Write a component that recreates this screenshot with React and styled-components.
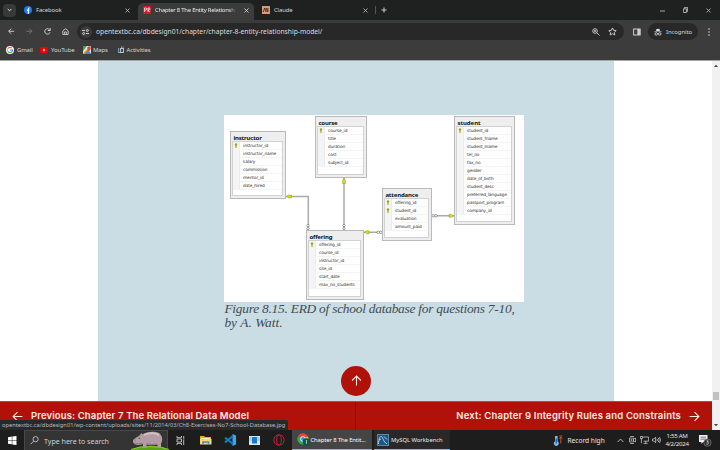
import React from "react";
import styled, { createGlobalStyle } from "styled-components";

const Global = createGlobalStyle`
  * { box-sizing: border-box; }
  html, body { margin: 0; padding: 0; }
  body { width: 720px; height: 450px; overflow: hidden; background: #fff; }
  svg { display: block; flex: none; }
`;

const Screen = styled.div`
  width: 720px;
  height: 450px;
  display: flex;
  flex-direction: column;
  overflow: hidden;
  font-family: "Noto Sans", "Open Sans", sans-serif;
  white-space: nowrap;
`;

/* Shared text: $w is the width the label takes in its row */
const Label = styled.span`
  flex: none;
  width: ${(p) => (p.$w ? p.$w + "px" : "auto")};
  font-size: ${(p) => p.$size || 6}px;
  letter-spacing: ${(p) => p.$ls || 0}px;
  color: ${(p) => p.$color || "#d5d6d6"};
  margin-left: ${(p) => p.$ml || 0}px;
  mask-image: ${(p) => (p.$fade ? "linear-gradient(90deg, #000 88%, transparent)" : "none")};
`;

const Slot = styled.span`
  display: flex;
  flex: none;
  margin-left: ${(p) => p.$ml || 0}px;
`;

/* Browser chrome */
const TabBar = styled.div`
  height: 20px;
  flex: none;
  display: flex;
  align-items: center;
  background: #1f2120;
`;
const TabSearch = styled.div`
  width: 13px;
  height: 13px;
  margin-left: 3px;
  border-radius: 4px;
  background: #383939;
  display: grid;
  place-items: center;
`;
const Tab = styled.div`
  width: ${(p) => p.$w}px;
  height: ${(p) => (p.$active ? 17 : 20)}px;
  align-self: flex-end;
  display: flex;
  align-items: center;
  padding-left: ${(p) => p.$pl}px;
  padding-bottom: ${(p) => (p.$active ? 3 : 0)}px;
  padding-right: ${(p) => p.$pr}px;
  border-radius: 5px 5px 0 0;
  background: ${(p) => (p.$active ? "#3c3c3c" : "transparent")};
`;
const Spacer = styled.span`flex: 1;`;
const Divider = styled.span`
  width: 1px;
  height: 8px;
  background: #555;
`;

const Toolbar = styled.div`
  height: 21px;
  flex: none;
  display: flex;
  align-items: center;
  background: #3c3c3c;
  padding-top: 2px;
`;
const Omnibox = styled.div`
  width: 547px;
  height: 17px;
  margin-left: 8px;
  border-radius: 9px;
  background: #282828;
  display: flex;
  align-items: center;
  padding-left: 3px;
  padding-right: 7px;
`;
const SiteInfo = styled.span`
  width: 12px;
  height: 12px;
  border-radius: 50%;
  background: #3c3c3c;
  display: grid;
  place-items: center;
`;
const Incognito = styled.div`
  width: 50px;
  height: 17px;
  margin-left: 7px;
  border-radius: 9px;
  background: #282828;
  display: flex;
  align-items: center;
  padding-left: 6px;
`;
const Bookmarks = styled.div`
  height: 20px;
  flex: none;
  display: flex;
  align-items: center;
  padding-bottom: 1px;
  background: #3c3c3c;
  border-bottom: 1px solid #a3a6a7;
`;

/* Page */
const Viewport = styled.div`
  height: 369px;
  flex: none;
  display: flex;
`;
const Page = styled.main`
  width: 712px;
  display: flex;
  flex-direction: column;
  background: #fff;
  position: relative;
`;
const Article = styled.article`
  width: 516px;
  height: 340px;
  margin-left: 98px;
  padding: 54px 0 0 126.4px;
  background: #cbdde4;
`;
const Diagram = styled.div`
  position: relative;
  width: 300px;
  height: 187px;
  background: #fff;
`;
const Wires = styled.svg`
  position: absolute;
  inset: 0;
`;
const Entity = styled.section`
  position: absolute;
  left: ${(p) => p.$x}px;
  top: ${(p) => p.$y}px;
  width: ${(p) => p.$w}px;
  height: ${(p) => p.$h}px;
  display: flex;
  flex-direction: column;
  border: 1px solid #b9b9b9;
  background: #eeeeee;
  padding: 0 2px 2px 1.5px;
`;
const EntityName = styled.h3`
  margin: 0;
  height: 9px;
  flex: none;
  padding: 1.6px 0 0 1px;
  font: 700 6px/8px "Noto Sans", sans-serif;
  letter-spacing: ${(p) => p.$ls}px;
  color: #111;
`;
const Fields = styled.div`
  flex: 1;
  background: #fff;
  border: 1px solid #d2d2d2;
`;
const Field = styled.div`
  height: 8px;
  display: flex;
  align-items: center;
  font: 400 4.3px/7px "DejaVu Sans", sans-serif;
  letter-spacing: -0.14px;
  color: #303030;
  border-bottom: 1px solid #f4f4f4;
`;
const KeyCell = styled.span`
  width: 7px;
  height: 7px;
  margin-right: 2.7px;
  flex: none;
  display: grid;
  place-items: center;
  background: ${(p) => (p.$key ? "#f5f5e6" : "#f3f4f6")};
  border-right: 1px solid #ebebee;
`;
const Caption = styled.p`
  margin: 0;
  font: italic 400 13.4px/14px "Liberation Serif", serif;
  color: #3f4c53;
`;
const CaptionLine = styled.span`
  display: block;
  letter-spacing: ${(p) => p.$ls}px;
`;
const ToTop = styled.button`
  position: absolute;
  left: 341px;
  top: 304.5px;
  width: 30px;
  height: 30px;
  padding: 0;
  border: 0;
  border-radius: 50%;
  background: #b01109;
  display: grid;
  place-items: center;
`;
const PageNav = styled.nav`
  height: 29px;
  display: grid;
  grid-template-columns: 356px 356px;
  background: #b01109;
  border-top: 1px solid #c7423b;
`;
const NavLink = styled.div`
  display: flex;
  align-items: center;
  justify-content: ${(p) => (p.$next ? "flex-end" : "flex-start")};
  padding: 0 12px 0;
  gap: 8px;
  border-right: ${(p) => (p.$next ? "0" : "1px solid #920d08")};
  font: 600 9.5px/14px Inter, sans-serif;
  letter-spacing: ${(p) => p.$ls}px;
  color: #ffe9e4;
`;
const StatusBubble = styled.div`
  position: absolute;
  left: 0;
  bottom: 0;
  width: 288px;
  height: 10px;
  padding-left: 2px;
  background: #292929;
  border-radius: 0 2px 0 0;
  font-size: 5.7px;
  line-height: 10px;
  letter-spacing: 0.015px;
  color: #b9bbbd;
`;
const Scrollbar = styled.div`
  width: 8px;
  background: #f1f1f1;
  display: flex;
  flex-direction: column;
  align-items: center;
  justify-content: space-between;
  padding: 3px 0;
`;
const Thumb = styled.div`
  width: 6px;
  height: 8px;
  margin-top: 325px;
  margin-bottom: auto;
  background: #c1c1c1;
`;

/* Taskbar */
const Taskbar = styled.footer`
  height: 20px;
  flex: none;
  display: flex;
  align-items: center;
  background: #1d1d1d;
`;
const SearchBox = styled.div`
  width: 144px;
  height: 20px;
  margin-left: 6px;
  background: #343434;
  border: 1px solid #484848;
  border-width: 1px 1px 0 1px;
  display: flex;
  align-items: center;
  padding-left: 5px;
`;
const TaskButton = styled.div`
  width: ${(p) => p.$w}px;
  height: 20px;
  margin-left: ${(p) => p.$ml}px;
  background: ${(p) => (p.$active ? "#454545" : "#282828")};
  border-bottom: 1px solid #76b9ed;
  display: flex;
  align-items: center;
  padding-left: ${(p) => p.$pl}px;
`;
const Clock = styled.div`
  width: 28px;
  margin-left: 2px;
  text-align: center;
  font-size: 6.1px;
  line-height: 8.5px;
  letter-spacing: -0.28px;
  color: #e6e6e6;
`;

const Close = ({ s = 5, c = "#c9caca" }) => (
  <svg width={s} height={s} viewBox="0 0 5 5" stroke={c} strokeWidth=".75"><path d="M.5 .5l4 4M4.5 .5l-4 4" /></svg>
);
const Arrow = ({ dir, s = 8, c = "#d4d4d4", w = 1 }) => (
  <svg width={s} height={s} viewBox="0 0 10 10" fill="none" stroke={c} strokeWidth={w}>
    <g transform={`rotate(${{ left: 0, up: 90, right: 180 }[dir]} 5 5)`}><path d="M9.5 5H1M5 1L1 5l4 4" /></g>
  </svg>
);
const ChromeLogo = () => (
  <svg width="14" height="13" viewBox="0 0 14 13">
    <path d="M6 6L1.1 3.2A5.6 5.6 0 0 1 10.9 3.2z" fill="#ea4335" />
    <path d="M6 6L1.1 3.2A5.6 5.6 0 0 0 6 11.6z" fill="#34a853" />
    <path d="M6 6L6 11.6A5.6 5.6 0 0 0 10.9 3.2z" fill="#fbbc05" />
    <circle cx="6" cy="6" r="2.7" fill="#fff" /><circle cx="6" cy="6" r="2" fill="#4285f4" />
    <circle cx="9.3" cy="8.9" r="3.6" fill="#0e5744" /><path d="M9.4 7v3.8" stroke="#d8eee7" strokeWidth=".8" />
  </svg>
);
const Hippo = () => (
  <svg width="39" height="19" viewBox="0 0 39 19">
    <path d="M0 19Q8 14.5 20 14.7Q31 14.5 38 19z" fill="#5aa319" />
    <path d="M0 18.5Q8 15.2 19 15.7Q30 15.3 38 18.5" stroke="#91c92e" fill="none" strokeWidth="1" />
    <path d="M2 11C1.5 7.5 6 6.5 9 4L10.2 2l1.3 1.3C15 .5 23 0 27 1.5C32 4 32 10 30 12.5V16H26.5v-2.5C22 14.5 18 14.5 15.5 13.5v3H12V13C8 14.5 3 14.5 2 11z" fill="#b39da2" />
    <path d="M13 4C18 1.5 25 1.5 28 4.5" stroke="#d3c2c4" strokeWidth="1.8" fill="none" />
    <path d="M3.5 12Q7 13.8 11.5 12M15.5 12.8q5 1.3 10 .3" stroke="#806970" strokeWidth=".8" fill="none" />
    <circle cx="8.3" cy="7.2" r=".6" fill="#35262a" /><circle cx="4.3" cy="9" r=".4" fill="#503e42" />
  </svg>
);
const KeyIcon = () => (
  <svg width="4" height="5" viewBox="0 0 4 5"><circle cx="2" cy="1.5" r="1.2" fill="#a3a42b" /><path d="M2 2v3" stroke="#77781f" strokeWidth=".8" /></svg>
);

const ENTITIES = [
  { name: "instructor", x: 5.5, y: 16, w: 56.5, h: 67.5, keys: 1, ls: -0.17, fields: ["instructor_id", "instructor_name", "salary", "commission", "mentor_id", "date_hired"] },
  { name: "course", x: 90.5, y: 1, w: 52, h: 61.5, keys: 1, ls: -0.17, fields: ["course_id", "title", "duration", "cost", "subject_id"] },
  { name: "student", x: 229.5, y: 1, w: 61.5, h: 109, keys: 1, ls: -0.02, fields: ["student_id", "student_fname", "student_lname", "tel_no", "fax_no", "gender", "date_of_birth", "student_desc", "preferred_language", "passport_program", "company_id"] },
  { name: "attendance", x: 157.5, y: 73, w: 50, h: 52.5, keys: 2, ls: -0.15, fields: ["offering_id", "student_id", "evaluation", "amount_paid"] },
  { name: "offering", x: 81.5, y: 115, w: 58.5, h: 69.5, keys: 1, ls: -0.15, fields: ["offering_id", "course_id", "instructor_id", "site_id", "start_date", "max_no_students"] },
];

function BrowserTop() {
  return (
    <>
      <TabBar>
        <TabSearch><svg width="5" height="4" viewBox="0 0 5 4" fill="none" stroke="#ddd"><path d="M.7 1l1.8 1.8L4.3 1" /></svg></TabSearch>
        <Tab $w={122} $pl={8} $pr={8}>
          <svg width="8" height="8" viewBox="0 0 8 8"><circle cx="4" cy="4" r="4" fill="#1877f2" /><path d="M4.3 8V3.1c0-.9.4-1.2 1.4-1.1M2.8 4.4h2.6" stroke="#fff" strokeWidth="1.1" fill="none" /></svg>
          <Label $ml={4} $ls={-0.18}>Facebook</Label><Spacer /><Close />
        </Tab>
        <Tab $w={116} $pl={5} $pr={5} $active>
          <svg width="8" height="8" viewBox="0 0 8 8"><rect width="8" height="8" rx="1" fill="#c91f2c" /><path d="M1.6 6V2h1.2q1 0 1 1t-1 1H1.6M5 6V2h1.2q.8 0 .8 1t-.8 1H5l1.7 2" stroke="#fff" strokeWidth=".7" fill="none" /></svg>
          <Label $ml={4} $w={83} $fade $size={5.9} $ls={-0.23} $color="#ebebeb">Chapter 8 The Entity Relationsh</Label><Spacer /><Close c="#eee" />
        </Tab>
        <Tab $w={121} $pl={8} $pr={7}>
          <svg width="8" height="8" viewBox="0 0 8 8"><rect width="8" height="8" fill="#d99a75" /><path d="M1.2 6L2.7 2 4.2 6M4.1 2L5.6 6M5.9 2v4" stroke="#30231e" strokeWidth=".85" fill="none" /></svg>
          <Label $ml={4} $ls={-0.18}>Claude</Label><Spacer /><Close />
        </Tab>
        <Divider />
        <Slot $ml={5}><svg width="6" height="6" viewBox="0 0 6 6" stroke="#ccc"><path d="M3 .5v5M.5 3h5" /></svg></Slot>
        <Spacer />
        <svg width="5" height="5" viewBox="0 0 5 5" stroke="#ccc" strokeWidth=".8"><path d="M0 3h5" /></svg>
        <Slot $ml={18}><svg width="5" height="6" viewBox="0 0 5 6" stroke="#ccc" strokeWidth=".8" fill="none"><path d="M.4 1.8h3v3.7h-3zM1.4 1.6V.4h3.2v4H3.5" /></svg></Slot>
        <Slot $ml={18}><Close /></Slot>
        <Slot $ml={9} />
      </TabBar>
      <Toolbar>
        <Slot $ml={8}><Arrow dir="left" s={6.5} w={1.4} /></Slot>
        <Slot $ml={11.5}><Arrow dir="right" s={6.5} w={1.4} c="#777" /></Slot>
        <Slot $ml={11}><svg width="7" height="7" viewBox="0 0 7 7" fill="none" stroke="#d4d4d4" strokeWidth=".95"><path d="M6 4.3A2.7 2.7 0 1 1 5.5 1.7L6 2.3M6.2 0v2.5H3.8" /></svg></Slot>
        <Slot $ml={11}><svg width="7" height="7" viewBox="0 0 7 7" fill="none" stroke="#d4d4d4" strokeWidth=".85"><path d="M.8 2.9L3.5.7l2.7 2.2v3.6H.8zM2.6 6.3V3.9h1.8v2.4" /></svg></Slot>
        <Omnibox>
          <SiteInfo><svg width="7" height="6" viewBox="0 0 7 6" fill="none" stroke="#ddd" strokeWidth=".9"><path d="M0 1.5h3M4 4.5h3" /><circle cx="5.3" cy="1.5" r="1" /><circle cx="1.7" cy="4.5" r="1" /></svg></SiteInfo>
          <Label $ml={4.5} $size={6.7} $color="#dcdddd" $ls={-0.01}>opentextbc.ca/dbdesign01/chapter/chapter-8-entity-relationship-model/</Label>
          <Spacer />
          <svg width="8" height="8" viewBox="0 0 8 8" fill="none" stroke="#d4d4d4" strokeWidth=".9"><circle cx="3" cy="3" r="2.3" /><path d="M4.7 4.7l2.8 2.8M2 3h2M3 2v2" /></svg>
          <Slot $ml={8}><svg width="9" height="9" viewBox="0 0 9 9" fill="none" stroke="#d4d4d4" strokeWidth=".9"><path d="M4.5.9l1.1 2.4 2.6.3-1.9 1.8.5 2.6-2.3-1.3L2.2 8l.5-2.6L.8 3.6l2.6-.3z" /></svg></Slot>
        </Omnibox>
        <Slot $ml={9}><svg width="8" height="8" viewBox="0 0 8 8"><rect x=".6" y="1" width="6.5" height="6" fill="none" stroke="#ccc" strokeWidth="1" /><rect x="4.3" y="1" width="3" height="6" fill="#ccc" /></svg></Slot>
        <Incognito>
          <svg width="8" height="8" viewBox="0 0 8 8"><path d="M2 3L2.6.7 4 1.1 5.4.7 6 3zM.3 3.4h7.4v.7H.3z" fill="#ddd" /><g fill="none" stroke="#ddd" strokeWidth=".8"><circle cx="2.2" cy="5.9" r="1.3" /><circle cx="5.8" cy="5.9" r="1.3" /><path d="M3.4 5.6h1.2" /></g></svg>
          <Label $ml={4.5} $ls={-0.1}>Incognito</Label>
        </Incognito>
        <Slot $ml={10}><svg width="2" height="8" viewBox="0 0 2 8" fill="#ccc"><circle cx="1" cy="1" r=".8" /><circle cx="1" cy="4" r=".8" /><circle cx="1" cy="7" r=".8" /></svg></Slot>
      </Toolbar>
      <Bookmarks>
        <Slot $ml={6}><svg width="8" height="8" viewBox="0 0 8 8"><circle cx="4" cy="4" r="4" fill="#fff" /><g fill="none" strokeWidth="1.1"><path d="M5.8 2.2A2.6 2.6 0 0 0 1.7 2.8" stroke="#ea4335" /><path d="M1.7 2.8a2.6 2.6 0 0 0 0 2.4" stroke="#fbbc05" /><path d="M1.7 5.2a2.6 2.6 0 0 0 4.1.6" stroke="#34a853" /><path d="M5.8 5.8A2.6 2.6 0 0 0 6.6 4H4" stroke="#4285f4" /></g></svg></Slot>
        <Label $ml={3} $w={23} $ls={-0.18}>Gmail</Label>
        <svg width="8" height="6" viewBox="0 0 8 6"><rect width="8" height="6" rx="1.4" fill="#f00000" /><path d="M3.2 1.6v2.8L5.6 3z" fill="#fff" /></svg>
        <Label $ml={3} $w={31.5} $ls={-0.1}>YouTube</Label>
        <svg width="8" height="8" viewBox="0 0 8 8"><rect width="8" height="8" rx="1" fill="#e6e9e8" /><path d="M0 0h4L0 5z" fill="#34a853" /><path d="M0 8l5-5 3 5z" fill="#4285f4" /><path d="M0 8l4.2-4.4" stroke="#fbbc05" strokeWidth="1.4" /><path d="M6 5.5C5 4 4.2 3.2 4.2 2a1.8 1.8 0 0 1 3.6 0c0 1.2-.8 2-1.8 3.5z" fill="#ea4335" /></svg>
        <Label $ml={2.5} $w={23.5} $ls={-0.15}>Maps</Label>
        <svg width="8" height="8" viewBox="0 0 8 8" fill="none"><path d="M4 1.2h2.5M1.6 2.2v4.3H4" stroke="#83b7dd" strokeWidth="1.2" strokeDasharray="1.5 .5" /><rect x="3.6" y="2.5" width="2.8" height="4" stroke="#c9d5de" strokeWidth=".9" /></svg>
        <Label $ml={2} $ls={-0.1}>Activities</Label>
      </Bookmarks>
    </>
  );
}

function SchoolDiagram() {
  return (
    <Diagram>
      <Wires width="300" height="187" viewBox="0 0 300 187" fill="none">
        <g stroke="#aaa" strokeWidth="1.5">
          <path d="M62 81.5H84.3V115M120 63V115M140 117.3H158M208 100.8H230" />
        </g>
        <g stroke="#666" strokeWidth=".6" fill="#fff">
          <circle cx="84" cy="110.6" r="1.2" /><circle cx="84" cy="113.4" r="1.2" />
          <circle cx="120" cy="110.6" r="1.2" /><circle cx="120" cy="113.4" r="1.2" />
          <circle cx="154.3" cy="117.3" r="1.3" /><circle cx="156.8" cy="117.3" r="1.3" />
          <circle cx="209.2" cy="100.8" r="1.3" /><circle cx="212" cy="100.8" r="1.3" />
        </g>
        <g fill="#d4dc18" stroke="#8f951c" strokeWidth=".5">
          <path d="M62.5 81.5l2-1.4h3v2.8h-3zM118.6 65.5l1.4-2 1.4 2v3h-2.8zM140.5 117.3l2-1.5h2.5v3h-2.5zM229.5 100.8l-2-1.4H225v2.8h2.5z" />
        </g>
      </Wires>
      {ENTITIES.map((e) => (
        <Entity key={e.name} $x={e.x} $y={e.y} $w={e.w} $h={e.h}>
          <EntityName $ls={e.ls}>{e.name}</EntityName>
          <Fields>
            {e.fields.map((f, i) => (
              <Field key={f}><KeyCell $key={i < e.keys}>{i < e.keys && <KeyIcon />}</KeyCell>{f}</Field>
            ))}
          </Fields>
        </Entity>
      ))}
    </Diagram>
  );
}

function WindowsBar() {
  return (
    <Taskbar>
      <Slot $ml={8}><svg width="9" height="9" viewBox="0 0 9 9" fill="#fff"><path d="M0 1.2l3.8-.6v3.6H0zM4.3.5L8.5 0v4.2H4.3zM0 4.8h3.8v3.5L0 7.8zM4.3 4.8h4.2V9l-4.2-.6z" /></svg></Slot>
      <Slot $ml={1} />
      <SearchBox>
        <svg width="9" height="9" viewBox="0 0 9 9" fill="none" stroke="#d5d5d5" strokeWidth=".8"><circle cx="5.6" cy="3.2" r="2.6" /><path d="M3.7 5.1L.6 8.3" /></svg>
        <Label $ml={5} $w={86.5} $size={7.1} $ls={-0.02} $color="#d0d0d0">Type here to search</Label>
        <Hippo />
      </SearchBox>
      <Slot $ml={8}><svg width="9" height="9" viewBox="0 0 9 9" fill="none" stroke="#ddd" strokeWidth=".8"><path d="M1 0v1.7h4.5V0M1 9V7.4h4.5V9M1 3h4.5v3H1zM7.7 0v2.2M7.7 4v5" /><path d="M7 3h1.4" /></svg></Slot>
      <Slot $ml={15}><svg width="12" height="10" viewBox="0 0 12 10"><path d="M0 1h4l1 1h6v7H0z" fill="#e7ac28" /><path d="M1 3h9v2H1z" fill="#fff2b5" /><path d="M0 4h11.5v5.5H0z" fill="#ffd668" /><path d="M3 9.5V7h5.5v2.5" fill="none" stroke="#3a8ed0" strokeWidth="1.5" /></svg></Slot>
      <Slot $ml={12}><svg width="12" height="12" viewBox="0 0 12 12"><path d="M8.5 0L12 1.5v9L8.5 12z" fill="#35a9ee" /><path d="M1 3.6l8 6.4M1 8.4L9 2" stroke="#147ec4" strokeWidth="2" /></svg></Slot>
      <Slot $ml={13}><svg width="11" height="9" viewBox="0 0 11 9"><rect width="11" height="9" fill="#dce6eb" /><rect x="3" y="1" width="5" height="6.5" fill="#1479d0" /><path d="M.5 2h2M.5 4h2M8.5 2h2M8.5 4h2" stroke="#5cafdf" /></svg></Slot>
      <Slot $ml={13}><svg width="12" height="12" viewBox="0 0 12 12" fill="none" stroke="#bc2139" strokeWidth="1"><circle cx="6" cy="6" r="5.2" /><ellipse cx="6" cy="6" rx="2.3" ry="5" /></svg></Slot>
      <TaskButton $w={80} $ml={6.5} $pl={5} $active><ChromeLogo /><Label $size={5.9} $ls={-0.12} $color="#fff">Chapter 8 The Entit...</Label></TaskButton>
      <TaskButton $w={76} $ml={2.5} $pl={3}>
        <svg width="12" height="12" viewBox="0 0 12 12"><rect x=".5" y=".5" width="11" height="11" fill="#1d5684" stroke="#5788a9" /><path d="M1.5 10C1.5 5 3 2 4.5 2.5S6 8 10 9.8M7 2.5l3 3M2 6l2-1" stroke="#c2d8e5" strokeWidth=".9" fill="none" /></svg>
        <Label $ml={2} $size={5.9} $ls={-0.05} $color="#eee">MySQL Workbench</Label>
      </TaskButton>
      <Spacer />
      <svg width="10" height="11" viewBox="0 0 10 11"><path d="M2 1h2.6v5.3a2.4 2.4 0 1 1-2.6 0z" fill="#84b8e9" /><path d="M3.3 3.5v5" stroke="#1567bf" strokeWidth="1.5" /><path d="M7.8 8.5V2M6.2 3.7L7.8 2l1.6 1.7M6.3 1h3" stroke="#d85b2b" strokeWidth=".9" fill="none" /></svg>
      <Label $ml={5} $w={49.5} $size={6.6} $ls={0} $color="#e6e6e6">Record high</Label>
      <svg width="7" height="5" viewBox="0 0 7 5" stroke="#ddd" strokeWidth=".8" fill="none"><path d="M.7 4L3.5 1l2.8 3" /></svg>
      <Slot $ml={5}><svg width="7" height="8" viewBox="0 0 7 8" stroke="#ccc" strokeWidth=".7" fill="none"><path d="M1 .5h4M1 7.5h4M.5 2h4v4h-4zM4.5 3.3L6.5 2v4L4.5 4.7" /><circle cx="2.5" cy="4" r=".7" /></svg></Slot>
      <Slot $ml={4}><svg width="9" height="8" viewBox="0 0 9 8" stroke="#ddd" strokeWidth=".7" fill="none"><path d="M2.6 1h6v4.2h-5M5.7 5.2v2M3.5 7.4h4M.4.5h2v2.2h-2zM1.4 2.7v4.5" /></svg></Slot>
      <Slot $ml={3}><svg width="9" height="8" viewBox="0 0 9 8" stroke="#ddd" strokeWidth=".7" fill="none"><path d="M.5 3h1.3L3.6 1.2v5.6L1.8 5H.5zM5 2.8q1 1.2 0 2.4M6.2 1.8q2 2.2 0 4.4M7.4 1q2.4 3 0 6" /></svg></Slot>
      <Clock><div>1:55 AM</div><div>4/2/2024</div></Clock>
      <Slot $ml={7}><svg width="14" height="13" viewBox="0 0 14 13"><path d="M1 1h8.5v7H5.2L3.4 10V8H1z" fill="#eee" /><path d="M2.5 3.2H8M2.5 5.2H8" stroke="#444" strokeWidth=".7" /><circle cx="9.5" cy="8.6" r="3.7" fill="#303030" stroke="#999" strokeWidth=".5" /><path d="M8.5 6.9h1.7L9.4 8.2q1.2.1 1 1.2-.6 1.2-2 .6" stroke="#eee" strokeWidth=".7" fill="none" /></svg></Slot>
      <Slot $ml={8} />
    </Taskbar>
  );
}

export default function App() {
  return (
    <Screen>
      <Global />
      <BrowserTop />
      <Viewport>
        <Page>
          <Article>
            <SchoolDiagram />
            <Caption>
              <CaptionLine $ls={-0.24}>Figure 8.15. ERD of school database for questions 7-10,</CaptionLine>
              <CaptionLine $ls={0.02}>by A. Watt.</CaptionLine>
            </Caption>
          </Article>
          <PageNav>
            <NavLink $ls={0.13}><Arrow dir="left" s={11} c="#ffe9e4" />Previous: Chapter 7 The Relational Data Model</NavLink>
            <NavLink $next $ls={0.18}>Next: Chapter 9 Integrity Rules and Constraints<Arrow dir="right" s={11} c="#ffe9e4" /></NavLink>
          </PageNav>
          <ToTop aria-label="Back to top"><Arrow dir="up" s={11} c="#ffe9e4" /></ToTop>
          <StatusBubble>opentextbc.ca/dbdesign01/wp-content/uploads/sites/11/2014/03/Ch8-Exercises-No7-School-Database.jpg</StatusBubble>
        </Page>
        <Scrollbar>
          <svg width="4" height="3" viewBox="0 0 4 3"><path d="M0 3l2-2.3L4 3z" fill="#444" /></svg>
          <Thumb />
          <svg width="4" height="3" viewBox="0 0 4 3"><path d="M0 0l2 2.3L4 0z" fill="#444" /></svg>
        </Scrollbar>
      </Viewport>
      <WindowsBar />
    </Screen>
  );
}
